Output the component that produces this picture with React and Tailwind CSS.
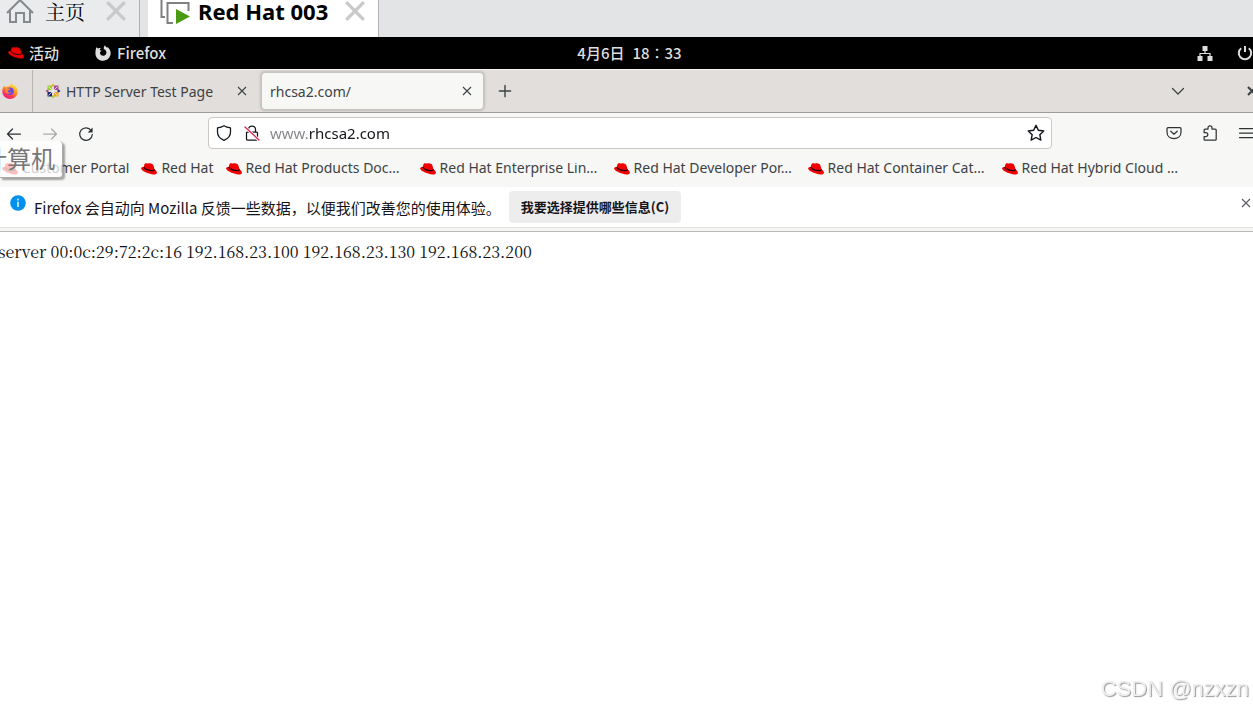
import React from "react";

const bookmarks = [
  "Red Hat Products Doc…",
  "Red Hat Enterprise Lin…",
  "Red Hat Developer Por…",
  "Red Hat Container Cat…",
  "Red Hat Hybrid Cloud …",
];

function RedHat({ dark }) {
  return (
    <svg viewBox="0 0 16 12" className="h-3 w-4 shrink-0" aria-hidden="true">
      <path
        d="M3.300 1.700C3.700.6 4.600.1 5.600.3l1 .3c.4.1.6-.1 1-.3 1-.4 2.600.2 3.600.8.700.400 1 .8 1.300 1.700l1 3.500c1.200.7 2.300 2 2.400 3.300.1 1.500-1.500 2.100-3.700 1.900C8.200 11.200 2.500 9 .6 6.600-.5 5.100.4 4 2.700 4z"
        fill="#f00000"
      />
      <path
        d="M2.800 4.200c.4 2 6.300 4.100 9.400 3.300.8-.2 1.200-.6 1.100-1.200"
        fill="none"
        stroke={dark ? "#4a0000" : "#160000"}
        strokeWidth="1.200"
      />
    </svg>
  );
}

function Cross({ className, width = 1.1 }) {
  return (
    <svg viewBox="0 0 10 10" className={className} fill="none" stroke="currentColor" strokeWidth={width} aria-hidden="true">
      <path d="M1 1l8 8M9 1L1 9" />
    </svg>
  );
}

function HomeIcon() {
  return (
    <svg viewBox="0 0 28 24" className="h-6 w-7 shrink-0" fill="none" stroke="#85888c" strokeWidth="2" aria-hidden="true">
      <path d="M1 13L14 0l13 13M4 11v11h6v-9h8v9h6V11" />
    </svg>
  );
}

function MachineIcon() {
  return (
    <svg viewBox="0 0 31 26" className="h-[26px] w-[31px] shrink-0" aria-hidden="true">
      <path d="M5 17H1.500V0M13 23H7.500V3h21v8" fill="none" stroke="#808080" strokeWidth="2" />
      <path d="M16 9v15l14-7.500z" fill="#4a9a14" />
    </svg>
  );
}

function FirefoxMono() {
  return (
    <svg viewBox="0 0 16 16" className="size-4 shrink-0" aria-hidden="true">
      <path
        d="M1.300 2.200l1.800 1.200c1-.5 2-.6 3-.4C5 3.500 4.600 4.300 4.800 5.300l1.800.5-1.600 1.400c-.2 2 1.200 3.500 3.200 3.500 2 0 3.400-1.500 3.200-3.400-.1-1.500-1.200-2.600-2.600-3.300C8.600 2.500 9 1.200 10.200.2c.2 1.300.9 2 1.900 2.600l.4-.9c2 1.500 3.200 3.700 3.200 6.200 0 4.300-3.400 7.700-7.700 7.700S.4 12.500.4 8.200c0-2.200.3-4 .9-6z"
        fill="#dedede"
      />
    </svg>
  );
}

function FirefoxColor() {
  return (
    <svg viewBox="0 0 16 16" className="size-4 shrink-0" aria-hidden="true">
      <defs>
        <linearGradient id="flame" x1="0.8" y1="0" x2="0.25" y2="1">
          <stop offset="0" stopColor="#fff04a" />
          <stop offset="0.45" stopColor="#ff9325" />
          <stop offset="0.75" stopColor="#ff3750" />
          <stop offset="1" stopColor="#e31587" />
        </linearGradient>
      </defs>
      <path
        d="M2 3l1.700 1.300C5 3.300 6.500 3 8 3.300 8 2 8.700.8 9.800.1c.2 1.500 1 2.100 2 2.900l.2-1c2.300 1.600 3.700 3.900 3.700 6.400 0 4.200-3.400 7.500-7.700 7.500S.3 12.500.3 8.300C.3 6.300.9 4.600 2 3z"
        fill="url(#flame)"
      />
      <circle cx="8" cy="8.200" r="3.800" fill="#7148dc" />
      <path d="M3.500 5.200c2-.8 4 0 5 1.600-1.800.1-2.700.5-2.800 1.400 0 1.200 1.600 1.700 3.600.6-1 2.500-5.300 2.600-6.100-.6z" fill="#ff8b2d" />
    </svg>
  );
}

function Pinwheel() {
  return (
    <svg viewBox="0 0 16 16" className="size-4 shrink-0" aria-hidden="true">
      <path d="M2.500 2.500H7V7H2.500z" fill="#9ccd2a" />
      <path d="M9 2.500h4.500V7H9z" fill="#a14f8c" />
      <path d="M9 9h4.500v4.500H9z" fill="#efa724" />
      <path d="M2.500 9H7v4.500H2.500z" fill="#262577" />
      <path d="M8 .5L9.500 2.500 8 4 6.500 2.500z" fill="#efa724" />
      <path d="M15.500 8L13.500 9.500 12 8l1.500-1.500z" fill="#262577" />
      <path d="M8 15.500L6.500 13.500 8 12l1.500 1.500z" fill="#9ccd2a" />
      <path d="M.5 8l2-1.500L4 8 2.500 9.500z" fill="#a14f8c" />
      <path d="M3.500 3.500l9 9M12.500 3.500l-9 9" stroke="#f3f0ee" strokeWidth="0.800" />
    </svg>
  );
}

const line = { fill: "none", stroke: "currentColor", strokeWidth: 1.25, strokeLinecap: "round", strokeLinejoin: "round" };

function Icon({ children, className = "size-4" }) {
  return (
    <svg viewBox="0 0 16 16" className={className + " shrink-0"} {...line} aria-hidden="true">
      {children}
    </svg>
  );
}

export default function App() {
  return (
    <div className="min-h-screen overflow-x-hidden bg-white font-['Noto_Sans','Noto_Sans_CJK_SC',sans-serif] text-sm text-[#2e3436]">
      <div className="flex h-[37px] overflow-hidden bg-[#e3e4e6]">
        <div className="flex items-start border-r border-[#b0b2b5] bg-[#e9ebed] pl-1.5 pr-3">
          <HomeIcon />
          <span className="ml-[11px] font-['Noto_Serif_CJK_SC',serif] text-xl leading-6 text-black">主页</span>
          <button aria-label="关闭主页" className="ml-5 text-[#c8c9ca]">
            <Cross className="size-[22px]" width={1.500} />
          </button>
        </div>
        <div className="ml-2 flex items-start border-r border-[#b0b2b5] bg-white pr-3 pl-3">
          <MachineIcon />
          <span className="ml-[7px] text-[22px] leading-[22px] font-bold text-black">Red Hat 003</span>
          <button aria-label="关闭 Red Hat 003" className="ml-4 text-[#c8c9ca]">
            <Cross className="size-[22px]" width={1.500} />
          </button>
        </div>
      </div>

      <header className="grid h-8 grid-cols-[1fr_auto_1fr] items-center bg-black font-['Noto_Sans_CJK_SC',sans-serif] text-[15px] font-medium text-[#dedede]">
        <div className="flex items-center gap-9 pl-2">
          <button className="flex items-center gap-[5px]">
            <RedHat dark />
            活动
          </button>
          <button className="flex items-center gap-1.5">
            <FirefoxMono />
            Firefox
          </button>
        </div>
        <time className="flex gap-2 pl-1.5">
          <span>4月6日</span>
          <span>18∶33</span>
        </time>
        <div className="flex items-center justify-end gap-6">
          <svg viewBox="0 0 16 16" className="size-4" aria-hidden="true">
            <path d="M5.500 1h5v5h-5zM.5 11h5v5h-5zM10.500 11h5v5h-5z" fill="#dedede" />
            <path d="M8 6v2.500M3 11V8.500h10V11" fill="none" stroke="#dedede" strokeWidth="1.200" />
          </svg>
          <svg viewBox="0 0 16 16" className="size-4" fill="none" stroke="#dedede" strokeWidth="2" aria-hidden="true">
            <path d="M4.200 3.200a6.200 6.200 0 1 0 7.600 0M8 1v6" />
          </svg>
        </div>
      </header>

      <div className="flex h-11 items-center overflow-hidden border-t border-b border-t-[#f6f4f3] border-b-[#9f9b99] bg-[#e1dedb] text-[#3d4244]">
        <div className="flex h-full items-center border-r border-[#b8b4b1] pl-0.5 pr-3.5">
          <FirefoxColor />
        </div>
        <div className="flex w-[228px] items-center pl-3 pr-3.5">
          <Pinwheel />
          <span className="ml-[5px] flex-1 whitespace-nowrap pt-0.5">HTTP Server Test Page</span>
          <button aria-label="关闭标签页">
            <Cross className="size-2.5" />
          </button>
        </div>
        <div className="flex h-[38px] w-[223px] items-center rounded border border-[#c8c4c1] bg-[#f7f7f6] pl-2 pr-[11px] shadow-[0_0_3px_rgba(0,0,0,0.3)]">
          <span className="flex-1 pt-0.5">rhcsa2.com/</span>
          <button aria-label="关闭标签页">
            <Cross className="size-2.5" />
          </button>
        </div>
        <button aria-label="新建标签页" className="ml-3">
          <Icon className="size-[18px]">
            <path d="M8 3v10M3 8h10" />
          </Icon>
        </button>
        <button aria-label="列出所有标签页" className="ml-auto">
          <Icon>
            <path d="M2.500 5.500L8 11l5.500-5.500" />
          </Icon>
        </button>
        <button aria-label="关闭窗口" className="-mr-1 ml-[61px]">
          <Cross className="size-2.5" width={2.200} />
        </button>
      </div>

      <div className="bg-[#f7f7f6] pt-1 pb-[9px]">
        <div className="flex h-8 items-center pl-1.5">
          <nav className="flex items-center gap-5 pt-0.5">
            <button aria-label="后退">
              <Icon>
                <path d="M14.500 8H1.500M6.500 3l-5 5 5 5" />
              </Icon>
            </button>
            <button aria-label="前进" className="text-[#a9abab]">
              <Icon>
                <path d="M1.500 8h13M9.500 3l5 5-5 5" />
              </Icon>
            </button>
            <button aria-label="重新载入">
              <Icon>
                <path d="M13.200 4.500A6.300 6.300 0 1 0 14.300 8.500" />
                <path d="M14.600 1.500v5H9.600z" fill="currentColor" stroke="none" />
              </Icon>
            </button>
          </nav>
          <label className="ml-[114px] mr-[114px] flex h-8 flex-1 items-center rounded border border-[#cdc8c4] bg-white pl-[7px] pr-1.5 text-[#15141a]">
            <Icon>
              <path d="M8 .8c2 1.300 4.200 1.800 6.500 2V7c0 3.900-2.800 6.800-6.500 8.300C4.300 13.800 1.500 10.900 1.500 7V2.800C3.800 2.600 6 2.100 8 .8z" />
            </Icon>
            <span className="ml-3 flex">
              <Icon>
                <path d="M4.500 7V4.500a3.500 3.500 0 0 1 7 0V7M3.500 7h9c.6 0 1 .4 1 1v6c0 .6-.4 1-1 1h-9c-.6 0-1-.4-1-1V8c0-.6.4-1 1-1z" />
                <path d="M1 2l14 13" stroke="#ffffff" strokeWidth="3" />
                <path d="M1 2l14 13" stroke="#e2214b" />
              </Icon>
            </span>
            <input
              aria-label="网址"
              defaultValue="www.rhcsa2.com"
              className="ml-2.5 min-w-0 flex-1 bg-[linear-gradient(to_right,#85858a_40px,#15141a_40px)] bg-clip-text pt-0.5 text-[15px] text-transparent outline-none"
            />
            <Icon className="size-[18px]">
              <path d="M8 1.200l2.100 4.400 4.800.6-3.500 3.300.9 4.800L8 12l-4.300 2.300.9-4.800L1.100 6.200l4.800-.6z" />
            </Icon>
          </label>
          <div className="-mr-px flex items-center gap-5">
            <button aria-label="Pocket">
              <Icon>
                <path d="M2 2.500h12c.6 0 1 .4 1 1V7c0 4-3 6.500-7 6.500S1 11 1 7V3.500c0-.6.4-1 1-1zM4.800 6.200L8 9.200l3.200-3" />
              </Icon>
            </button>
            <button aria-label="扩展">
              <Icon>
                <path d="M6 4V2.800a2 2 0 0 1 4 0V4h3.300c.5 0 .9.4.9.900v9.400c0 .5-.4.900-.9.900H3c-.5 0-.9-.4-.9-.9v-2.800h1.800a1.900 1.900 0 0 0 0-3.800H2.100V4.900c0-.5.4-.9.9-.9z" />
              </Icon>
            </button>
            <button aria-label="打开应用程序菜单">
              <Icon>
                <path d="M1.500 3.500h13M1.500 8h13M1.500 12.500h13" />
              </Icon>
            </button>
          </div>
        </div>

        <div className="relative pt-3.5">
          <nav className="flex h-[15px] items-start gap-3 overflow-hidden whitespace-nowrap pl-0.5 leading-[9px] text-[#3d4244]">
            <a href="#portal" className="flex items-start gap-1">
              <RedHat />
              Customer Portal
            </a>
            <a href="#redhat" className="flex items-start gap-1">
              <RedHat />
              Red Hat
            </a>
            {bookmarks.map((name) => (
              <a key={name} href="#bookmark" className="flex w-[182px] shrink-0 items-start gap-1">
                <RedHat />
                {name}
              </a>
            ))}
          </nav>
          <div className="absolute -top-2 left-0 flex h-[37px] w-[63px] items-center justify-end overflow-hidden whitespace-nowrap rounded-r border-r border-b border-[#aaa] bg-white/75 pr-[7px] pb-0.5 font-['Noto_Sans_CJK_SC',sans-serif] text-2xl text-[#777] shadow-[2px_2px_2px_rgba(0,0,0,0.35)]">
            计算机
          </div>
        </div>
      </div>

      <section className="flex h-10 items-center bg-white pl-2.5 pr-0.5 text-[#15141a]">
        <svg viewBox="0 0 16 16" className="mb-2 size-4 shrink-0" aria-hidden="true">
          <circle cx="8" cy="8" r="7.800" fill="#0090ed" />
          <path d="M8 3.800v1.600M8 6.800v5.200" stroke="white" strokeWidth="1.400" />
        </svg>
        <p className="ml-2 mt-0.5 font-['Noto_Sans_CJK_SC',sans-serif] text-[15px]">Firefox 会自动向 Mozilla 反馈一些数据，以便我们改善您的使用体验。</p>
        <button className="ml-2 h-8 rounded bg-[#ededee] px-3 font-['Noto_Sans_CJK_SC',sans-serif] text-[13px] font-bold">我要选择提供哪些信息(C)</button>
        <button aria-label="关闭通知" className="mb-2 ml-auto text-[#5b5b66]">
          <Cross className="size-2.5" />
        </button>
      </section>
      <div className="h-[5px] border-t border-b border-t-[#e4e4e4] border-b-[#bcbab8] bg-[#f5f5f4]" />

      <main className="overflow-hidden pt-2">
        <p className="-ml-0.5 whitespace-nowrap font-['Noto_Serif_CJK_SC','Liberation_Serif',serif] text-base text-[#111]">
          server 00:0c:29:72:2c:16 192.168.23.100 192.168.23.130 192.168.23.200
        </p>
      </main>
      <footer className="fixed right-1 bottom-1.5 font-['Liberation_Sans',sans-serif] text-[22px] text-[#eeeeee] [text-shadow:1px_1px_1px_#999]">
        CSDN @nzxzn
      </footer>
    </div>
  );
}
